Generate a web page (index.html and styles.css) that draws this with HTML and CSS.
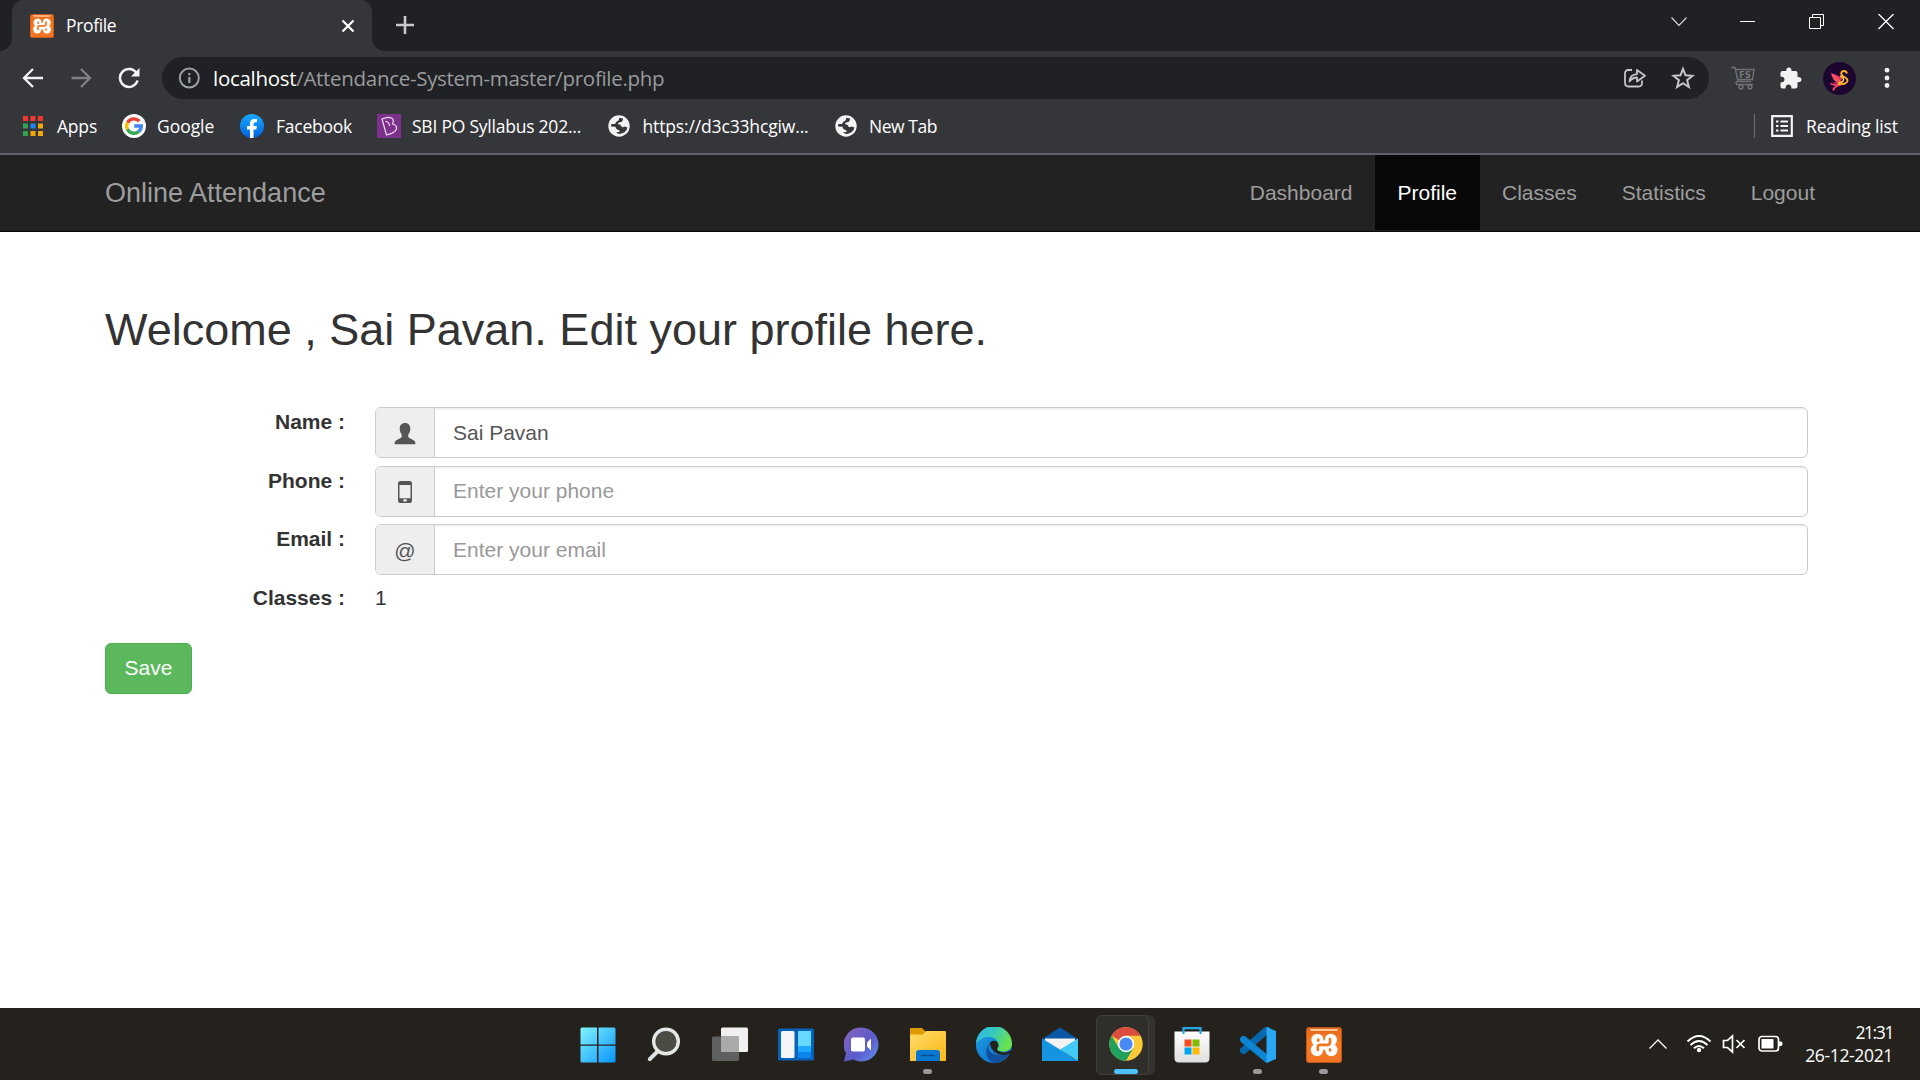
FILE: index.html
```html
<!DOCTYPE html>
<html lang="en">
<head>
<meta charset="utf-8">
<title>Profile</title>
<link rel="stylesheet" href="styles.css">
</head>
<body>
<svg class="defs" aria-hidden="true">
  <defs>
    <linearGradient id="orange" x1="0" y1="0" x2="0" y2="1"><stop offset="0" stop-color="#e5681a"/><stop offset=".5" stop-color="#fb7a20"/><stop offset="1" stop-color="#ef7424"/></linearGradient>
    <symbol id="xampp" viewBox="0 0 36 36">
      <rect width="36" height="36" rx="3" fill="#b9561a"/>
      <rect x="1" y="1" width="34" height="34" rx="2.5" fill="url(#orange)"/>
      <path d="M4 2h28q0 2-3 2H7Q4 4 4 2z" fill="#ffc9a0"/>
      <g fill="#fff"><circle cx="11.500" cy="13" r="6.200"/><circle cx="24.800" cy="13" r="6.200"/><circle cx="11" cy="23" r="6.200"/><circle cx="25.300" cy="23" r="6.200"/><path d="M9 12h18v12H9z"/></g>
      <path d="M18.200 7v5.500M18.200 29v-5.500" stroke="#f4761f" stroke-width="1.800" stroke-linecap="round"/>
      <path d="M12.300 12.500v1.300M24 12v3.500q0 2.400-2.500 2.400H14q-2.200 0-2.200 2.300V23M24 22.500v1" fill="none" stroke="#f4761f" stroke-width="2.600" stroke-linecap="round"/>
    </symbol>
    <symbol id="globe" viewBox="0 0 22 22">
      <circle cx="11" cy="11" r="10.700" fill="#f1f3f4"/>
      <path d="M11.500 2.800L15 3.500Q15 7 12 7.200Q9.500 7.500 10.300 9.300Q13.300 9.700 13.300 11.600Q14.500 13 16.500 11.600L19.500 12.500Q18 18.300 11.500 19Q8.500 18.500 8.200 17.300L11.500 17Q12 14.500 9.500 14.700Q7.300 13.500 7.500 11.800L3 11.500Q3 10 3.500 9H7Q8 6 10.500 5.500z" fill="#35363a"/>
    </symbol>
  </defs>
</svg>

<header class="browser">
  <div class="tabstrip">
    <div class="tab">
      <svg class="favicon" width="24" height="24"><use href="#xampp"/></svg>
      <span class="ui tab-title">Profile</span>
      <svg class="tab-close" width="14" height="14" viewBox="0 0 14 14"><path d="M1.500 1.500l11 11M12.500 1.500l-11 11" stroke="#fff" stroke-width="2.200"/></svg>
    </div>
    <svg class="new-tab" width="18" height="18" viewBox="0 0 18 18"><path d="M9 0v18M0 9h18" stroke="#c8c9cb" stroke-width="2.600"/></svg>
    <div class="window-buttons">
      <svg width="16" height="16" viewBox="0 0 16 16"><path d="M.5 3.500L8 11.500L15.500 3.500" fill="none" stroke="#ddd" stroke-width="1.100"/></svg>
      <svg width="16" height="16" viewBox="0 0 16 16"><path d="M0 7.500h15" stroke="#fff"/></svg>
      <svg width="16" height="16" viewBox="0 0 16 16"><path d="M.5 3.500h11v11H.5zM3.500 3V.5h11v11H12" fill="none" stroke="#fff"/></svg>
      <svg width="16" height="16" viewBox="0 0 16 16"><path d="M.5 0l15 15M15.500 0l-15 15" stroke="#fff" stroke-width="1.300"/></svg>
    </div>
  </div>

  <div class="toolbar">
    <svg width="22" height="22" viewBox="0 0 22 22"><path d="M21 11H2.500M11 2L2 11l9 9" fill="none" stroke="#f1f3f4" stroke-width="2.300"/></svg>
    <svg width="22" height="22" viewBox="0 0 22 22"><path d="M1.500 11h18M11 2l9 9-9 9" fill="none" stroke="#808184" stroke-width="2.300"/></svg>
    <svg width="22" height="22" viewBox="0 0 22 22"><path d="M18.800 6.500A9 9 0 1 0 19.600 13.500" fill="none" stroke="#f1f3f4" stroke-width="2.500"/><path d="M21.500 1v8.500H13z" fill="#f1f3f4"/></svg>
    <div class="omnibox">
      <svg width="22" height="22" viewBox="0 0 22 22"><circle cx="11.300" cy="11" r="9.500" fill="none" stroke="#9aa0a6" stroke-width="2"/><path d="M11.300 10v6M11.300 6v2.300" stroke="#9aa0a6" stroke-width="2.200"/></svg>
      <div class="ui url"><span class="host">localhost</span><span>/Attendance-System-master/profile.php</span></div>
      <svg class="share" width="24" height="24" viewBox="0 0 24 24"><path d="M9 4H5.500Q2 4 2 7.500v9Q2 20.500 5.500 20.500h10Q19 20.500 19 17v-2.500M6.500 15.500Q7 8.500 14 8.200V4L22 9.800L14 15.500v-4Q9.500 11.500 6.500 15.500z" fill="none" stroke="#c4c5c7" stroke-width="1.800" stroke-linejoin="round"/></svg>
      <svg width="24" height="24" viewBox="0 0 24 24"><path d="M12 2.800l2.500 6.500 7 .5-5.400 4.400 1.800 6.800-5.900-3.800-5.900 3.800 1.800-6.800L2.500 9.800l7-.5z" fill="none" stroke="#c4c5c7" stroke-width="2"/></svg>
    </div>
    <svg class="cart" width="26" height="24" viewBox="0 0 26 24"><path d="M1 1.500h4l3 14h13M6 3.500h18l-1.500 10H7M7 18.500q-2-2 0-3M6 18.500h17" fill="none" stroke="#6f7073" stroke-width="1.400"/><circle cx="11" cy="21" r="1.900" fill="none" stroke="#77787a" stroke-width="1.400"/><circle cx="20" cy="21" r="1.900" fill="none" stroke="#77787a" stroke-width="1.400"/><text x="9" y="11.500" class="cart-text">FS</text></svg>
    <svg class="puzzle" width="22" height="22" viewBox="0 0 22 22"><path d="M2.500 4H6.300Q6 .5 8.800.5T11.500 4H15.500Q17.500 4 17.500 6V10Q21.500 9.700 21.500 12.600T17.500 15.300V19.500Q17.500 21.500 15.500 21.500H11.500Q11.500 17.500 8.500 17.500T5.500 21.500H2.500Q.5 21.500.5 19.500V15.500Q4.500 15.500 4.500 12.500T.5 9.500V6Q.5 4 2.500 4z" fill="#f1f3f4"/></svg>
    <svg class="avatar" width="33" height="33" viewBox="0 0 33 33"><circle cx="16.500" cy="16.500" r="16.500" fill="#1c0630"/><path d="M8 11Q9 17.500 14 20.500Q12 20.800 9.500 20.300Q12 22.500 15 21.500Q18 20 19 16.500Q16 13.500 8 11z" fill="#f0336c"/><path d="M9 13l8 6M11 17l5 4" stroke="#ff8a3c"/><path d="M7.500 21.500Q12 24 17.500 22M10 28.500Q12 23.500 18 22.500" fill="none" stroke="#f23f5f" stroke-width="1.800"/><path d="M24 11.500Q23 8.500 20.500 9Q17.500 10 18.500 12.500Q20 14.500 23 16Q26.500 19 22 21.500Q19 22.500 15 22" fill="none" stroke="#fdae2b" stroke-width="1.900"/><path d="M17 14q5 2 3 5-1 1.500-4 1.500" fill="none" stroke="#ffd83a" stroke-width="1.500"/></svg>
    <svg class="menu" width="6" height="22" viewBox="0 0 6 22"><g fill="#f1f3f4"><circle cx="3" cy="3.200" r="2.400"/><circle cx="3" cy="11" r="2.400"/><circle cx="3" cy="18.500" r="2.400"/></g></svg>
  </div>

  <div class="bookmarks">
    <svg width="20" height="20" viewBox="0 0 20 20"><path d="M0 0h5v5H0zM7.500 0h5v5h-5zM15 0h5v5h-5z" fill="#f0382e"/><path d="M0 7.500h5v5H0zM0 15h5v5H0z" fill="#31a152"/><path d="M7.500 7.500h5v5h-5z" fill="#1f87f0"/><path d="M15 7.500h5v5h-5zM7.500 15h5v5h-5zM15 15h5v5h-5z" fill="#f3a60c"/></svg>
    <span class="ui bm bm-apps">Apps</span>
    <svg width="24" height="24" viewBox="0 0 24 24"><circle cx="12" cy="12" r="12" fill="#fff"/><g fill="none" stroke-width="3.400"><path d="M17.300 7.200A7.300 7.300 0 0 0 5.500 8.700" stroke="#ea4335"/><path d="M5.500 8.500a7.300 7.300 0 0 0 0 7" stroke="#fbbc05"/><path d="M5.500 15.300a7.300 7.300 0 0 0 11.300 2.200" stroke="#34a853"/><path d="M16.700 17.500A7 7 0 0 0 19.300 12H12.200" stroke="#4285f4"/></g></svg>
    <span class="ui bm bm-google">Google</span>
    <svg width="24" height="24" viewBox="0 0 24 24"><defs><linearGradient id="fb" x2="0" y2="1"><stop stop-color="#19aaff"/><stop offset="1" stop-color="#0163e0"/></linearGradient></defs><circle cx="12" cy="12" r="12" fill="url(#fb)"/><path d="M10 24v-8.500H7V12h3V9.500Q10 5 14.500 5q1.300 0 2.500.3v3h-1.500Q13.500 8.300 13.500 10.200V12h3.400l-.6 3.500h-2.800V24z" fill="#fff"/></svg>
    <span class="ui bm bm-facebook">Facebook</span>
    <svg width="24" height="24" viewBox="0 0 24 24"><path d="M0 0h24v24H0z" fill="#7e318c"/><path d="M5 5Q11 2.500 14.500 4Q17.500 6 15.500 10Q20 11 19.500 15Q18 19 9.500 21zM8.500 7Q13 9 12.500 12" fill="none" stroke="#e9d8ee" stroke-width="1.200"/></svg>
    <span class="ui bm bm-sbi">SBI PO Syllabus 202...</span>
    <svg width="22" height="22"><use href="#globe"/></svg>
    <span class="ui bm bm-https">https://d3c33hcgiw...</span>
    <svg width="22" height="22"><use href="#globe"/></svg>
    <span class="ui bm bm-newtab">New Tab</span>
    <div class="reading">
      <svg width="22" height="22" viewBox="0 0 22 22"><path d="M1.200 1.200h19.600v19.600H1.200z" fill="none" stroke="#f1f3f4" stroke-width="2.200"/><path d="M5 6.500h2.500M9.500 6.500H17M5 11h2.500M9.500 11H17M5 15.500h2.500M9.500 15.500H17" stroke="#f1f3f4" stroke-width="2.200"/></svg>
      <span class="ui bm bm-reading">Reading list</span>
    </div>
  </div>
</header>

<nav class="navbar">
  <a class="brand">Online Attendance</a>
  <div class="links"><a>Dashboard</a><a class="active">Profile</a><a>Classes</a><a>Statistics</a><a>Logout</a></div>
</nav>

<main class="page">
  <h1>Welcome , Sai Pavan. Edit your profile here.</h1>
  <div class="row">
    <label>Name :</label>
    <div class="group">
      <span class="addon"><svg width="22" height="22" viewBox="0 0 22 22"><path d="M11 0C14.500 0 16.500 2.500 16.300 6C16.100 9 15.300 10 14.500 11.300C14 12.500 14 14 15 14.700L20 17.500Q21.500 18.300 21.500 21.300H.5Q.5 18.300 2 17.500L7 14.700C8 14 8 12.500 7.500 11.300C6.700 10 5.900 9 5.700 6C5.500 2.500 7.500 0 11 0z" fill="#555"/></svg></span>
      <div class="field value">Sai Pavan</div>
    </div>
  </div>
  <div class="row">
    <label>Phone :</label>
    <div class="group">
      <span class="addon phone"><svg width="22" height="22" viewBox="0 0 22 22"><path fill-rule="evenodd" d="M6.500 0h9Q18 0 18 2.500v17q0 2.500-2.500 2.500h-9Q4 22 4 19.500v-17Q4 0 6.500 0zM5.500 4v13.300h11V4zM9.300 18.300v2.200h3.400v-2.200z" fill="#555"/></svg></span>
      <div class="field phone-field">Enter your phone</div>
    </div>
  </div>
  <div class="row">
    <label>Email :</label>
    <div class="group">
      <span class="addon">@</span>
      <div class="field">Enter your email</div>
    </div>
  </div>
  <div class="row">
    <label>Classes :</label>
    <span class="count">1</span>
  </div>
  <button class="save">Save</button>
</main>

<footer class="taskbar">
  <div class="dock">
    <div class="app"><svg width="36" height="36" viewBox="0 0 36 36"><defs><linearGradient id="win" gradientUnits="userSpaceOnUse" x1="0" y1="0" x2="36" y2="36"><stop stop-color="#84f6ff"/><stop offset="1" stop-color="#0692fb"/></linearGradient></defs><path d="M.5 2q0-1.500 1.500-1.500h15v17H.5zM18.500.5h15.500q1.500 0 1.500 1.500v15.500h-17zM.5 18.800h16.500v16.700H2Q.5 35.500.5 34zM18.500 18.800h17V34q0 1.500-1.500 1.500H18.500z" fill="url(#win)"/></svg></div>
    <div class="app"><svg width="36" height="36" viewBox="0 0 36 36"><path d="M12 24L3.800 32.200" stroke="#dfe2e3" stroke-width="4" stroke-linecap="round"/><circle cx="20" cy="14.500" r="12.300" fill="#4b4a43" stroke="#e6e8e8" stroke-width="3.400"/></svg></div>
    <div class="app"><svg width="36" height="36" viewBox="0 0 36 36"><rect x="9" y=".5" width="27" height="24.500" rx="1.500" fill="#f0f0f0"/><rect y="9.500" width="27" height="24.500" rx="1.500" fill="#606060"/><path d="M9 9.500h18V25H9z" fill="#aaa"/></svg></div>
    <div class="app"><svg width="36" height="36" viewBox="0 0 36 36"><rect y="1.500" width="36" height="32" rx="1.500" fill="#0863b8"/><rect x="3" y="4" width="13.500" height="27" rx="1.500" fill="#f5f5f7"/><path d="M20 4h13v15H20z" fill="#66d9ff"/><path d="M20 19h13v6H20z" fill="#1fa8ff"/><path d="M20 25h13v6H20z" fill="#0a86ee"/></svg></div>
    <div class="app"><svg width="36" height="36" viewBox="0 0 36 36"><defs><linearGradient id="chat" y2=".9"><stop stop-color="#8b64bd"/><stop offset=".6" stop-color="#5b5bc9"/><stop offset="1" stop-color="#648bed"/></linearGradient></defs><path d="M17.500.5a17 17 0 1 1-8 32L0 34.500 2 26A17 17 0 0 1 17.500.5z" fill="url(#chat)"/><rect x="7" y="10.500" width="14" height="14" rx="2" fill="#fff"/><path d="M23 15.500l4-4v12l-4-4z" fill="#fff"/></svg></div>
    <div class="app running"><svg width="36" height="36" viewBox="0 0 36 36"><defs><linearGradient id="folder" x2="1" y2="1"><stop stop-color="#ffdc68"/><stop offset="1" stop-color="#fbb719"/></linearGradient></defs><path d="M0 2q0-1 1-1h11l4 4v5H0z" fill="#df9b05"/><path d="M0 7.500h13L16 4h19q1 0 1 1v29H0z" fill="url(#folder)"/><path d="M6 34V26q0-3 3-3h18q3 0 3 3v8z" fill="#0a78cf"/><path d="M11 28.500h14" stroke="#094e91" stroke-width="1.500"/></svg></div>
    <div class="app"><svg width="36" height="36" viewBox="0 0 36 36"><defs><linearGradient id="edge" x2="1" y2=".4"><stop stop-color="#2cb7ee"/><stop offset=".5" stop-color="#36c8c0"/><stop offset="1" stop-color="#69e34c"/></linearGradient><linearGradient id="edge2" y2="1"><stop stop-color="#1aa0e5"/><stop offset="1" stop-color="#0c67c8"/></linearGradient></defs><circle cx="18" cy="18" r="18" fill="url(#edge2)"/><path d="M0 17A18 18 0 0 1 36 17C36 24 28 26 22 23.500C20.500 22.500 23 21 22.500 17.500C21 7 5 8 0 17z" fill="url(#edge)"/><path d="M15 15C8 22 16 32 33 27Q26 36 18 36C8 32 9 18 15 15z" fill="#124f9d"/><path d="M14 18Q14 13 19 14Q23 15 22.300 19.500Q20 22 22 23.800Q28 27.500 34.500 23.500L37 24L33.500 27Q18 31 14 18z" fill="#24221d"/></svg></div>
    <div class="app"><svg width="36" height="36" viewBox="0 0 36 36"><path d="M0 12L18 .5L36 12V25H0z" fill="#0858a5"/><path d="M3 11.500h30V24H3z" fill="#f2f2f2"/><path d="M0 11.500L18 22.500L36 34H0z" fill="#1595e1"/><path d="M36 11.500V34L18 22.500z" fill="#43c9f5"/></svg></div>
    <div class="app selected"><div class="tile"></div><svg width="34" height="34" viewBox="0 0 34 34"><circle cx="17" cy="17" r="16.700" fill="#fbc937"/><path d="M17 17L2.500 8.700A16.700 16.700 0 0 1 31.500 8.700H17z" fill="#dc4c3f"/><path d="M2.500 8.700A16.700 16.700 0 0 0 17 33.700L24.200 21.200L10 21z" fill="#1fa05d"/><circle cx="17" cy="17" r="8.200" fill="#fff"/><circle cx="17" cy="17" r="6.600" fill="#4a8af4"/></svg></div>
    <div class="app"><svg width="36" height="36" viewBox="0 0 36 36"><defs><linearGradient id="store" y2="1" x2="0"><stop stop-color="#fff"/><stop offset="1" stop-color="#dedede"/></linearGradient></defs><path d="M.5 4.500h35V31q0 4.500-4.500 4.500H5Q.5 35.500.5 31z" fill="url(#store)"/><path d="M9.500 7V1.200h17V7" fill="none" stroke="#24a9e8" stroke-width="2.200"/><path d="M10.500 12.500h7v7h-7z" fill="#f25022"/><path d="M18.500 12.500h7v7h-7z" fill="#7fba00"/><path d="M10.500 20.500h7v7h-7z" fill="#00a4ef"/><path d="M18.500 20.500h7v7h-7z" fill="#ffb900"/></svg></div>
    <div class="app running"><svg width="36" height="36" viewBox="0 0 36 36"><path d="M3.500 23.500L27 3" stroke="#0769ad" stroke-width="7" stroke-linecap="round"/><path d="M3.500 12.500L27 32" stroke="#0d84d2" stroke-width="7" stroke-linecap="round"/><path d="M26.500 0L36 4v28l-9.500 4z" fill="#27a7f4"/></svg></div>
    <div class="app running"><svg width="36" height="36"><use href="#xampp"/></svg></div>
  </div>
  <div class="tray">
    <svg width="20" height="14" viewBox="0 0 20 14"><path d="M1.500 11.500L10 3l8.500 8.500" fill="none" stroke="#fff" stroke-width="1.400"/></svg>
    <svg class="wifi" width="26" height="20" viewBox="0 0 26 20"><g fill="none" stroke="#fff" stroke-width="1.900"><path d="M1.500 7.500Q13-3.500 24.500 7.500"/><path d="M4.500 11q8.500-8 17 0"/><path d="M8 14.300q5-4.700 10 0"/></g><circle cx="13" cy="16" r="2.200" fill="#fff"/></svg>
    <svg class="speaker" width="24" height="20" viewBox="0 0 24 20"><path d="M1.500 6.500v7h4l5 4.500V2L5.500 6.500zM14.500 6l8 8M22.500 6l-8 8" fill="none" stroke="#fff" stroke-width="1.700"/></svg>
    <svg class="battery" width="25" height="18" viewBox="0 0 25 18"><rect x="1" y="1.500" width="19.500" height="14.500" rx="3" fill="none" stroke="#fff" stroke-width="1.700"/><path d="M3.500 4h12v9.500h-12z" fill="#fff"/><path d="M21 6.500h2q1.500 0 1.500 2.200T23 11h-2z" fill="#fff"/></svg>
    <div class="clock ui"><span class="time">21:31</span><span class="date">26-12-2021</span></div>
  </div>
</footer>
</body>
</html>
```
FILE: styles.css
```css
* { box-sizing: border-box; }
body { margin: 0; width: 1920px; height: 1080px; overflow: hidden; display: flex; flex-direction: column; background: #fff; font-family: "Liberation Sans", Arial, sans-serif; font-size: 21px; line-height: 30px; color: #333; }
svg { display: block; flex: none; }
.defs { position: absolute; width: 0; height: 0; }
.ui { font-family: "Open Sans", "Noto Sans", sans-serif; white-space: nowrap; }

/* Browser frame */
.browser { flex: none; height: 155px; background: #35363a; border-bottom: 2px solid #5f6368; }
.tabstrip { height: 51px; display: flex; background: #202124; }
.tab { width: 360px; margin-left: 12px; display: flex; align-items: center; padding: 0 17px 0 18px; background: #35363a; border-radius: 12px 12px 0 0; position: relative; }
.tab::before, .tab::after { content: ""; position: absolute; bottom: 0; width: 12px; height: 12px; }
.tab::before { left: -12px; background: radial-gradient(circle at 0 0, #202124 11.5px, #35363a 12px); }
.tab::after { right: -12px; background: radial-gradient(circle at 100% 0, #202124 11.5px, #35363a 12px); }
.tab-title { margin-left: 12px; color: #fff; font-size: 17.500px; letter-spacing: -.35px; padding-bottom: 1px; }
.tab-close { margin-left: auto; }
.new-tab { margin: 16px 0 0 24px; }
.window-buttons { margin: 14px 26px 0 auto; display: flex; gap: 53px; }

.toolbar { height: 54px; display: flex; align-items: center; gap: 26px; padding: 0 30px 0 22px; }
.omnibox { width: 1548px; height: 42px; margin-left: -4px; border-radius: 21px; background: #202124; display: flex; align-items: center; padding: 0 14px 0 16px; }
.url { margin: 0 0 1px 13px; font-size: 20.500px; letter-spacing: -.3px; color: #9a9b9d; }
.host { color: #fff; }
.share { margin: 0 24px 0 auto; }
.cart { margin-left: -5px; }
.cart-text { font: bold 8.500px "DejaVu Sans", sans-serif; fill: #77787a; }
.puzzle { margin-left: -2px; }
.avatar { margin-left: -5px; }
.menu { margin-left: 2px; }

.bookmarks { height: 42px; display: flex; align-items: center; padding-left: 23px; }
.bm { color: #fff; font-size: 17.500px; margin: 0 0 0 12px; padding-bottom: 1px; }
.bm-apps { width: 65px; margin-left: 14px; letter-spacing: -.2px; }
.bm-google { width: 83px; margin-left: 11px; letter-spacing: -.05px; }
.bm-facebook { width: 101px; letter-spacing: -.25px; }
.bm-sbi { width: 196px; margin-left: 11px; letter-spacing: -.23px; }
.bm-https { width: 192px; margin-left: 12.500px; letter-spacing: -.15px; }
.bm-newtab { margin-left: 12.500px; letter-spacing: -.45px; }
.reading { margin-left: auto; display: flex; align-items: center; height: 24px; border-left: 1px solid #6d6e72; padding-left: 16px; }
.bm-reading { width: 93px; margin: 0 21px 0 13px; letter-spacing: -.15px; }

/* Site navigation */
.navbar { flex: none; height: 77px; background: #222; border-bottom: 1px solid #080808; padding: 0 82.500px 0 105px; display: flex; justify-content: space-between; color: #9d9d9d; }
.brand { font-size: 27px; line-height: 77px; }
.links { display: flex; height: 75px; }
.links a { padding: 0 22.500px; line-height: 75px; }
.links .active { background: #080808; color: #fff; }

/* Profile form */
.page { flex: 1; padding: 0 112px 0 105px; }
h1 { margin: 73px 0 52px; font-size: 45px; font-weight: 400; line-height: 50px; }
.row { display: flex; height: 58.500px; }
label { width: 270px; padding-right: 30px; text-align: right; font-weight: 700; }
.group { flex: 1; height: 51px; display: flex; border: 1px solid #ccc; border-radius: 6px; overflow: hidden; }
.addon { width: 59px; background: #eee; border-right: 1px solid #ccc; display: flex; align-items: center; justify-content: center; color: #555; padding-top: 3px; }
.phone { padding-top: 1px; }
.field { flex: 1; padding-left: 18px; line-height: 49px; color: #999; box-shadow: inset 0 1.500px 1.500px rgba(0,0,0,.075); }
.phone-field { line-height: 47px; }
.value { color: #555; }
.save { display: block; margin-top: 2px; width: 87px; height: 51px; padding: 0 0 2px; border: 1px solid #4cae4c; border-radius: 6px; background: #5cb85c; color: #fff; font: 21px "Liberation Sans", Arial, sans-serif; }

/* Desktop taskbar */
.taskbar { flex: none; height: 72px; display: flex; background: #25221d; padding-left: 564px; }
.dock { display: flex; }
.app { width: 66px; height: 72px; display: flex; justify-content: center; padding: 19px 0 0 1px; position: relative; }
.running::after, .selected::after { content: ""; position: absolute; top: 61px; width: 9px; height: 5px; border-radius: 3px; background: #999; }
.selected::after { width: 24px; background: #4cc2ff; }
.selected svg { position: relative; }
.tile { position: absolute; left: 4px; top: 7px; width: 53px; height: 60px; border: 1px solid #42403b; border-radius: 6px; background: #302e2a; box-shadow: 6px 0 0 #35332f; }
.tray { margin-left: auto; display: flex; align-items: center; color: #fff; padding-right: 27px; }
.wifi { margin-left: 18px; }
.speaker { margin-left: 10px; }
.battery { margin-left: 12px; }
.clock { width: 88px; margin-left: 22px; display: flex; flex-direction: column; align-items: flex-end; font-size: 17.500px; line-height: 23px; }
.time { letter-spacing: -1.400px; }
.date { letter-spacing: -.35px; }
```
